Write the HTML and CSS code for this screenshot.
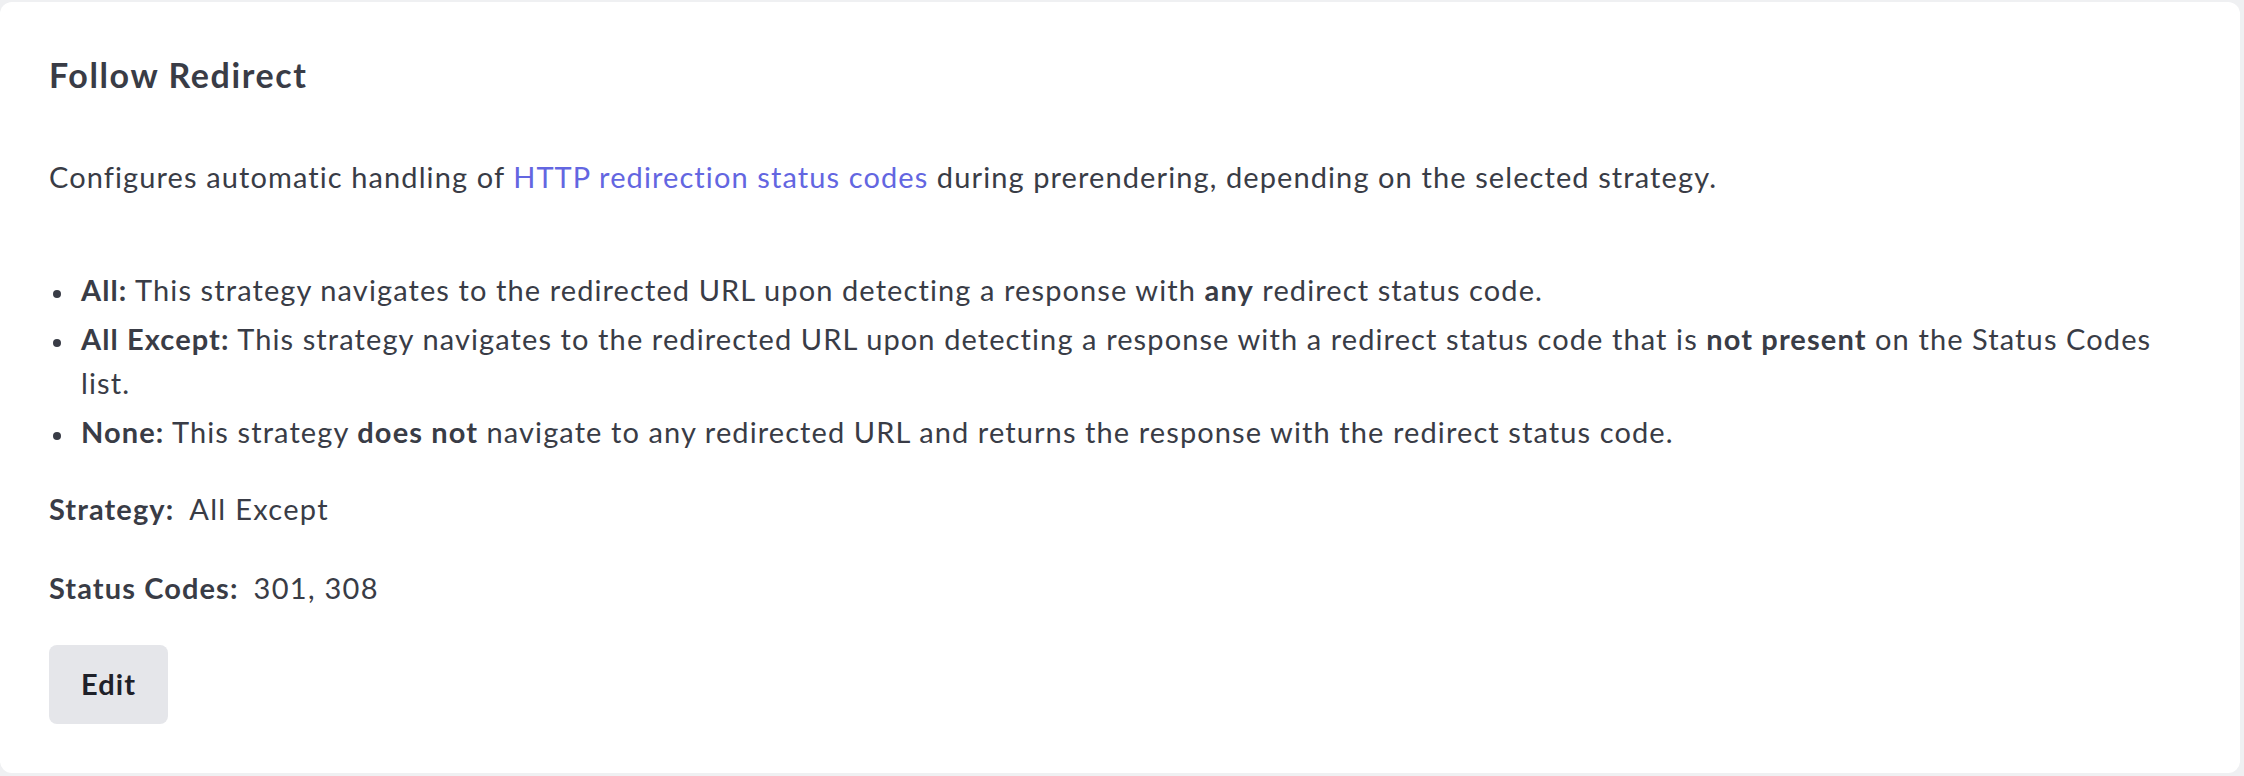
FILE: index.html
```html
<!DOCTYPE html>
<html lang="en">
<head>
<meta charset="utf-8">
<title>Follow Redirect</title>
<link rel="stylesheet" href="styles.css">
</head>
<body>
<section class="card">
  <h2 class="title">Follow Redirect</h2>
  <p class="intro">Configures automatic handling of <a class="link" href="#">HTTP redirection status codes</a> during prerendering, depending on the selected strategy.</p>
  <ul class="list">
    <li class="item"><span class="dot"></span><span class="text"><b>All:</b> This strategy navigates to the redirected URL upon detecting a response with <b>any</b> redirect status code.</span></li>
    <li class="item"><span class="dot"></span><span class="text"><b>All Except:</b> This strategy navigates to the redirected URL upon detecting a response with a redirect status code that is <b>not present</b> on the Status Codes list.</span></li>
    <li class="item"><span class="dot"></span><span class="text"><b>None:</b> This strategy <b>does not</b> navigate to any redirected URL and returns the response with the redirect status code.</span></li>
  </ul>
  <div class="field"><span class="label">Strategy:</span><span class="value">All Except</span></div>
  <div class="field"><span class="label">Status Codes:</span><span class="value">301, 308</span></div>
  <button class="btn" type="button">Edit</button>
</section>
</body>
</html>
```

FILE: styles.css
```css
html, body {
  margin: 0;
  padding: 0;
}
body {
  background: #eff0f2;
  font-family: Lato, "Liberation Sans", sans-serif;
  color: #393c46;
  padding: 2px 4px 4px 0;
}
.card {
  background: #ffffff;
  border-radius: 12px;
  padding: 53px 60px 49px 49px;
  font-size: 29px;
  line-height: 44px;
  letter-spacing: 1.1px;
}
.title {
  margin: 0;
  font-size: 34px;
  line-height: 40px;
  font-weight: 700;
  letter-spacing: 1.6px;
  color: #393c46;
}
.intro {
  margin: 60px 0 0 0;
}
.link {
  color: #6366e1;
  text-decoration: none;
}
.list {
  list-style: none;
  margin: 69px 0 0 0;
  padding: 0;
}
.item {
  display: grid;
  grid-template-columns: 32px 1fr;
  margin-top: 5px;
}
.item:first-child {
  margin-top: 0;
}
.dot {
  width: 8px;
  height: 8px;
  border-radius: 50%;
  background: #393c46;
  margin: 22px 0 0 4px;
}
.text {
  display: block;
}
b {
  font-weight: 700;
}
.field {
  margin-top: 33px;
}
.field + .field {
  margin-top: 35px;
}
.label {
  font-weight: 700;
  margin-right: 15px;
}
.value {
  letter-spacing: 1.3px;
}
.btn {
  display: block;
  margin-top: 35px;
  font-family: inherit;
  font-size: 29px;
  line-height: 44px;
  font-weight: 700;
  letter-spacing: 1.1px;
  color: #1f2129;
  background: #e5e6ea;
  border: none;
  border-radius: 8px;
  padding: 17px 32px 18px 32px;
}
```
